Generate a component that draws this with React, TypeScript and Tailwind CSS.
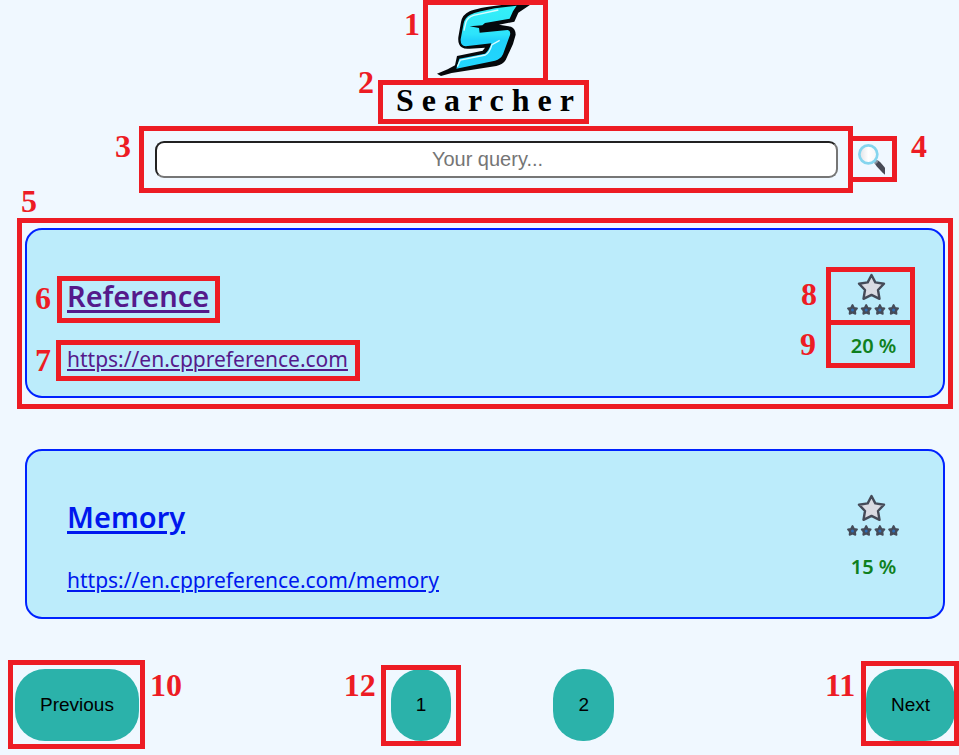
import type { ReactNode } from "react";
import clsx from "clsx";

type CalloutProps = { n: number; box: string; label: string; children: ReactNode; className?: string };

/* Wraps a part of the page and draws its numbered red frame over it. */
function Callout({ n, box, label, children, className }: CalloutProps) {
  return (
    <div className={clsx("relative", className)}>
      {children}
      <span className={clsx("pointer-events-none absolute border-5 border-[#ed1c24]", box)} />
      <span
        className={clsx(
          "pointer-events-none absolute font-['Liberation_Serif',serif] text-[32px] leading-8 font-bold text-[#ed1c24]",
          label,
        )}
      >
        {n}
      </span>
    </div>
  );
}

function Logo() {
  return (
    <svg viewBox="0 0 300 240" className="h-20 w-[100px]" role="img" aria-label="Searcher logo">
      <defs>
        <linearGradient id="logo-fill" x1="0" y1="0" x2="0" y2="1">
          <stop offset="0" stopColor="#35f0f8" />
          <stop offset="0.45" stopColor="#2de4fb" />
          <stop offset="0.55" stopColor="#20d2fb" />
          <stop offset="1" stopColor="#22d6fd" />
        </linearGradient>
      </defs>
      <path
        d="M288 13 L200 15 Q124 24 104 34 Q82 44 78 66 L70 112 Q68 134 80 142 Q90 148 104 146 L150 143 L143 152 L66 168 L60 196 L38 208 L6 221 L18 228 L50 219 L184 198 Q204 194 212 180 L234 132 L242 104 Q242 86 228 80 L192 74 L238 65 L250 38 Z"
        fill="#05080b"
      />
      <path
        d="M245 17 L234 34 L224 56 L150 69 L142 76 L104 79 L132 84 L134 98 L218 90 Q228 93 225 105 L204 163 Q197 178 180 182 L64 206 L73 176 L150 161 Q161 154 169 130 L92 139 Q76 137 77 118 L86 70 Q90 52 106 44 Q126 35 180 25 Z"
        fill="url(#logo-fill)"
      />
      <path
        d="M87 92 L93 66 Q98 52 116 46 L190 30 M67 200 L76 180 L151 165 Q163 160 171 134 L194 121"
        fill="none"
        stroke="#d9fcff"
        strokeWidth="4"
      />
    </svg>
  );
}

function Magnifier() {
  return (
    <svg viewBox="0 0 84 96" className="h-8 w-7" aria-hidden="true">
      <defs>
        <linearGradient id="lens" x1="0" y1="0" x2="1" y2="0">
          <stop offset="0" stopColor="#dfe1e5" />
          <stop offset="0.5" stopColor="#ffffff" />
          <stop offset="1" stopColor="#f3f4f6" />
        </linearGradient>
      </defs>
      <path d="M52 57 L62 49 L70 55 L84 71 V92 L77 86 L60 68 Z" fill="#484b56" />
      <path d="M50 53 L57 46 L64 53 L56 61 Z" fill="#8b95a1" />
      <circle cx="34" cy="31" r="27" fill="url(#lens)" stroke="#84d5ee" strokeWidth="8" />
    </svg>
  );
}

function Stars() {
  return (
    <svg viewBox="0 0 53 45" className="h-[45px] w-[53px]" role="img" aria-label="Rating">
      <path
        d="M24.5 2 L28.3 9.4 L37 10.7 L31 17 L32.5 25.8 L24.5 21.9 L16.5 25.8 L18 17 L12 10.7 L20.7 9.4 Z"
        fill="#dadbe2"
        stroke="#454b58"
        strokeWidth="2.4"
        strokeLinejoin="round"
      />
      {[5.5, 19.2, 32.9, 46.6].map((x) => (
        <g key={x} transform={`translate(${x} 36.6)`}>
          <path
            d="M0 -4.6 L1.5 -1.8 L4.5 -1.2 L2.6 1.2 L2.9 4.2 L0 3.1 L-2.9 4.2 L-2.6 1.2 L-4.5 -1.2 L-1.5 -1.8 Z"
            fill="#454b58"
            stroke="#454b58"
            strokeWidth="1.8"
            strokeLinejoin="round"
          />
          <circle cy="0.4" r="1.5" fill="#2d6cb4" />
        </g>
      ))}
    </svg>
  );
}

type Result = { title: string; url: string; score: number; visited: boolean; annotated: boolean };

const results: Result[] = [
  { title: "Reference", url: "https://en.cppreference.com", score: 20, visited: true, annotated: true },
  { title: "Memory", url: "https://en.cppreference.com/memory", score: 15, visited: false, annotated: false },
];

function ResultCard({ title, url, score, visited, annotated }: Result) {
  const color = visited ? "text-[#551a8b]" : "text-[#0018ee]";
  const heading = (
    <h2 className="text-[29px] leading-10 font-semibold">
      <a href={url} className={clsx("underline decoration-[3px] underline-offset-3", color)}>
        {title}
      </a>
    </h2>
  );
  const link = (
    <a href={url} className={clsx("block text-[21px] leading-8 underline decoration-2 underline-offset-2", color)}>
      {url}
    </a>
  );
  const percent = <p className="text-[20px] leading-8 font-semibold whitespace-nowrap text-[#0f8020]">{score} %</p>;

  const card = (
    <article className="flex justify-between rounded-[17px] border-2 border-[#0022ff] bg-[#bcecfb] pr-[43px] pb-[21px] pl-10 font-['Noto_Sans',sans-serif]">
      <div className="flex flex-col items-start gap-[27px] pt-[46px]">
        {annotated ? (
          <Callout n={6} box="-left-2.5 -right-[11px] top-0 -bottom-[7px]" label="-left-8 top-1.5">
            {heading}
          </Callout>
        ) : (
          heading
        )}
        {annotated ? (
          <Callout n={7} box="-left-[11px] -right-3 -top-[3px] -bottom-1.5" label="-left-8 top-px">
            {link}
          </Callout>
        ) : (
          link
        )}
      </div>
      <div className="flex flex-col items-center gap-3 pt-[43px]">
        {annotated ? (
          <Callout n={8} box="-left-[21px] -right-[15px] -top-1.5 -bottom-[7px]" label="-left-[46px] top-[5px]">
            <Stars />
          </Callout>
        ) : (
          <Stars />
        )}
        {annotated ? (
          <Callout
            n={9}
            className="flex w-full justify-center"
            box="-left-[21px] -right-[15px] -top-2.5 -bottom-1.5"
            label="-left-[47px] -top-0.5"
          >
            {percent}
          </Callout>
        ) : (
          percent
        )}
      </div>
    </article>
  );

  return (
    <li>
      {annotated ? (
        <Callout n={5} box="-left-2 -right-2 -top-2.5 -bottom-[11px]" label="-left-1 -top-[43px]">
          {card}
        </Callout>
      ) : (
        card
      )}
    </li>
  );
}

function PageButton({ children }: { children: ReactNode }) {
  return (
    <button
      type="button"
      className="h-[72px] cursor-pointer rounded-[30px] bg-[#2bb2aa] px-[25px] text-[19px] leading-6 text-black"
    >
      {children}
    </button>
  );
}

export default function App() {
  return (
    <div className="flex min-h-screen flex-col gap-[50px] overflow-x-hidden bg-[#f0f8ff] pr-1 pb-3.5 pl-[15px] font-['Liberation_Sans',Arial,sans-serif]">
      <header className="flex flex-col items-center">
        <Callout n={1} box="-left-3 -right-[13px] top-0 -bottom-[3px]" label="-left-[31px] top-2">
          <Logo />
        </Callout>
        <Callout n={2} className="ml-2" box="-left-[18px] -right-[7px] top-0 -bottom-1" label="-left-[38px] -top-3.5">
          <h1 className="font-['Liberation_Serif',serif] text-[32px] leading-10 font-bold tracking-[8px] text-black">
            Searcher
          </h1>
        </Callout>
        <form
          role="search"
          className="mt-[21px] flex items-center gap-[19px] self-stretch pr-[70px] pl-[140px]"
          onSubmit={(e) => e.preventDefault()}
        >
          <Callout n={3} className="grow" box="-left-4 -right-[15px] -inset-y-[15px]" label="-left-10 -top-[11px]">
            <input
              type="text"
              aria-label="Your query"
              placeholder="Your query..."
              className="block h-[37px] w-full rounded-[9px] border-2 border-t-[#212121] border-r-[#767676] border-b-[#767676] border-l-[#212121] bg-white pr-[18px] text-center text-[20px] text-black placeholder:text-[#757575]"
            />
          </Callout>
          <Callout n={4} box="-left-[9px] -right-3 -top-2 -bottom-1.5" label="left-[54px] -top-3.5">
            <button type="submit" aria-label="Search" className="block cursor-pointer">
              <Magnifier />
            </button>
          </Callout>
        </form>
      </header>

      <ul className="flex flex-col gap-[51px] px-2.5">
        {results.map((r) => (
          <ResultCard key={r.url} {...r} />
        ))}
      </ul>

      <nav className="flex justify-between" aria-label="Pages">
        <Callout n={10} box="-left-[7px] -right-1.5 -top-[9px] -bottom-2" label="left-[135px] top-0">
          <PageButton>Previous</PageButton>
        </Callout>
        <div className="flex gap-[102px]">
          <Callout n={12} box="-inset-x-2.5 -top-1 -bottom-[5px]" label="-left-[47px] top-0">
            <PageButton>1</PageButton>
          </Callout>
          <PageButton>2</PageButton>
        </div>
        <Callout n={11} box="-left-[5px] -right-1 -top-2 -bottom-[5px]" label="-left-[41px] top-0">
          <PageButton>Next</PageButton>
        </Callout>
      </nav>
    </div>
  );
}
